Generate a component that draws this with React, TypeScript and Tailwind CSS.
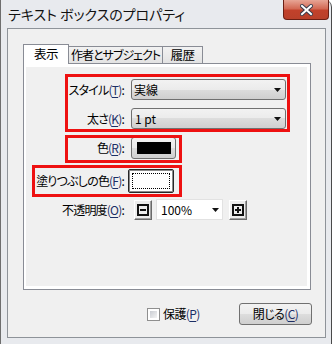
import React from 'react';

const font = "font-['Noto_Sans_CJK_JP','Noto_Sans',sans-serif] [font-feature-settings:'palt']";

const btn =
  'rounded-[3px] border border-[#707070] bg-[linear-gradient(#f2f2f2,#ebebeb_50%,#dddddd_50%,#cfcfcf)]';

function Key({ k }: { k: string }) {
  return (
    <span className="text-[#1c2f66]">
      (<span className="underline underline-offset-2">{k}</span>)
    </span>
  );
}

function Arrow() {
  return (
    <svg width="7" height="4" viewBox="0 0 7 4">
      <path d="M0 0h7L3.5 4z" fill="#111" />
    </svg>
  );
}

function BoxIcon({ plus }: { plus?: boolean }) {
  return (
    <svg width="12" height="12" viewBox="0 0 12 12">
      <rect x="1" y="1" width="10" height="10" fill="none" stroke="#111" strokeWidth="2" />
      <path d="M3 6h6" stroke="#111" strokeWidth="2" />
      {plus && <path d="M6 3v6" stroke="#111" strokeWidth="2" />}
    </svg>
  );
}

function Label({ text, k }: { text: string; k: string }) {
  return (
    <div className="w-[98px] shrink-0 text-right tracking-[-0.8px]">
      {text}
      <Key k={k} />:
    </div>
  );
}

function ClassicButton({ plus }: { plus?: boolean }) {
  return (
    <div className="flex h-[20px] w-[18px] items-center justify-center border border-t-white border-l-white border-r-[#6a6a6a] border-b-[#6a6a6a] bg-[#ececec] shadow-[inset_-1px_-1px_0_#a0a0a0]">
      <BoxIcon plus={plus} />
    </div>
  );
}

export default function App() {
  return (
    <div className={`h-[344px] w-[336px] overflow-hidden bg-white text-[12px] leading-none text-black ${font}`}>
      <div className="flex h-[344px] w-[332px] flex-col rounded-tr-[7px] border-l border-r border-l-[#6e6e6e] border-r-[#4a4a4a] bg-[#e8eaee]">
        {/* title bar */}
        <div className="relative flex h-[28px] shrink-0 items-center pl-[7px] pb-[1px]">
          <span className="text-[14px] text-[#111]">テキスト ボックスのプロパティ</span>
          <div className="absolute right-[2px] top-0 flex h-[20px] w-[46px] items-center justify-center rounded-b-[4px] border border-t-0 border-[#6b1f14] bg-[linear-gradient(#e7a595,#d36a55_45%,#c1412b_55%,#b9402a)]">
            <svg width="13" height="12" viewBox="0 0 13 12">
              <path d="M2 2l9 8M11 2l-9 8" stroke="#3b3b4a" strokeWidth="4" strokeLinecap="square" />
              <path d="M2 2l9 8M11 2l-9 8" stroke="#fff" strokeWidth="2" strokeLinecap="square" />
            </svg>
          </div>
        </div>

        {/* client area */}
        <div className="ml-[6px] flex h-[310px] w-[319px] flex-col border border-[#8e9399] bg-[#f0f0f0] pl-[15px] pt-[15px]">
          {/* tabs */}
          <div className="relative z-10 -mb-[1px] flex h-[20px] items-end whitespace-nowrap text-[12.5px] tracking-[-0.6px]">
            <div className="flex h-[20px] w-[46px] items-start justify-center border border-b-0 border-[#898c95] bg-white pt-[3px]">
              表示
            </div>
            <div className="mb-[1px] flex h-[17px] w-[94px] items-center justify-center overflow-hidden border border-l-0 border-b-0 border-[#898c95] bg-[linear-gradient(#f2f2f2,#e3e3e3)] text-[12px] tracking-[-1px]">
              作者とサブジェクト
            </div>
            <div className="mb-[1px] flex h-[17px] w-[40px] items-center justify-center border border-l-0 border-b-0 border-[#898c95] bg-[linear-gradient(#f2f2f2,#e3e3e3)]">
              履歴
            </div>
          </div>

          {/* panel */}
          <div className="h-[227px] w-[288px] border border-[#898c95] bg-white p-[3px] pl-[2px]">
            <div className="relative flex h-full flex-col bg-[#f0f0f0] pt-[12px]">
              <div className="flex h-[21px] items-center">
                <Label text="スタイル" k="T" />
                <div className={`ml-[7px] flex h-[21px] w-[155px] items-center justify-between pl-[2px] pr-[4px] ${btn}`}>
                  <span>実線</span>
                  <Arrow />
                </div>
              </div>
              <div className="mt-[8px] flex h-[21px] items-center">
                <Label text="太さ" k="K" />
                <div className={`ml-[7px] flex h-[21px] w-[155px] items-center justify-between pl-[3px] pr-[4px] ${btn}`}>
                  <span>1 pt</span>
                  <Arrow />
                </div>
              </div>
              <div className="mt-[8px] flex h-[22px] items-center">
                <Label text="色" k="R" />
                <div className={`ml-[7px] flex h-[22px] w-[45px] items-center justify-center ${btn}`}>
                  <div className="h-[12px] w-[34px] bg-black" />
                </div>
              </div>
              <div className="mt-[10px] flex h-[24px] items-center">
                <Label text="塗りつぶしの色" k="F" />
                <div className="ml-[4px] flex h-[24px] w-[46px] items-center justify-center rounded-[2px] border border-[#262626] bg-white shadow-[inset_0_0_0_1px_#8a8a8a]">
                  <div className="h-[16px] w-[38px] border border-dotted border-black" />
                </div>
              </div>
              <div className="mt-[6px] flex h-[21px] items-center">
                <Label text="不透明度" k="O" />
                <div className="ml-[10px]">
                  <ClassicButton />
                </div>
                <div className="ml-[4px] flex h-[21px] w-[67px] items-center justify-between border border-[#e2e2e2] bg-white pl-[4px] pr-[3px]">
                  <span>100%</span>
                  <Arrow />
                </div>
                <div className="ml-[6px]">
                  <ClassicButton plus />
                </div>
              </div>

              {/* annotation boxes */}
              <div className="absolute left-[39px] top-[7px] h-[58px] w-[225px] border-[3px] border-[#ee1111]" />
              <div className="absolute left-[39px] top-[68px] h-[28px] w-[117px] border-[3px] border-[#ee1111]" />
              <div className="absolute left-[6px] top-[98px] h-[32px] w-[150px] border-[3px] border-[#ee1111]" />
            </div>
          </div>

          {/* footer */}
          <div className="mt-[13px] flex h-[22px] items-center pr-[13px] tracking-[-0.6px]">
            <div className="ml-[124px] flex items-center gap-[3px]">
              <div className="h-[13px] w-[13px] border border-[#8f8f8f] bg-white p-[2px]">
                <div className="h-full w-full bg-[linear-gradient(135deg,#c9ccd2,#f4f4f4)]" />
              </div>
              <span>
                保護<Key k="P" />
              </span>
            </div>
            <div className={`ml-auto flex h-[22px] w-[73px] items-center justify-center ${btn}`}>
              閉じる<Key k="C" />
            </div>
          </div>
        </div>
      </div>
    </div>
  );
}
